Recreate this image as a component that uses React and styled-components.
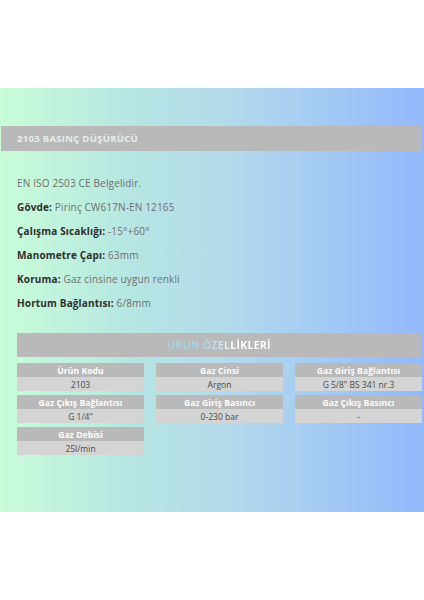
import styled, { createGlobalStyle } from 'styled-components';

const Global = createGlobalStyle`
  body {
    margin: 0;
    background: #fff;
    font-family: "Open Sans", "Liberation Sans", sans-serif;
  }
`;

const Band = styled.div`
  margin-top: 88px;
  height: 424px;
  padding: 38px 2px 0 1px;
  box-sizing: border-box;
  background: linear-gradient(90deg, #c9fdd8 0%, #b6e6e2 30%, #b2d9ec 55%, #a2c9f4 78%, #93b8fc 100%);
`;

const TitleBar = styled.div`
  height: 25px;
  background: #b9b9b9;
  display: flex;
  align-items: center;
  padding-left: 16px;
  font-weight: 700;
  font-size: 9.5px;
  color: #e4eeed;
  letter-spacing: 0.3px;
`;

const Specs = styled.div`
  margin-top: 20px;
  padding-left: 16px;
  display: flex;
  flex-direction: column;
`;

const SpecLine = styled.div`
  height: 24px;
  display: flex;
  align-items: center;
  font-size: 10px;
  letter-spacing: 0.15px;
  color: #6f6f6f;
  white-space: pre;

  b {
    color: #2e2e2e;
    font-weight: 700;
  }
`;

const Section = styled.div`
  margin: 18px 1px 0 16px;
  height: 24px;
  background: #b9b9b9;
  display: flex;
  align-items: center;
  justify-content: center;
`;

const SectionTitle = styled.span`
  font-weight: 700;
  font-size: 10.5px;
  letter-spacing: 0.3px;
  background: linear-gradient(90deg, #a3d0e3 0%, #a8d4e4 35%, #d6ebf1 55%, #ffffff 62%, #ffffff 100%);
  -webkit-background-clip: text;
  background-clip: text;
  color: transparent;
`;

const Grid = styled.div`
  margin: 6px 0 0 16px;
  display: grid;
  grid-template-columns: repeat(3, 127px);
  column-gap: 12px;
  row-gap: 4px;
`;

const Cell = styled.div`
  display: flex;
  flex-direction: column;
`;

const CellHead = styled.div`
  height: 14px;
  background: #b9b9b9;
  color: #fff;
  font-weight: 700;
  font-size: 8.5px;
  letter-spacing: 0.1px;
  display: flex;
  align-items: center;
  justify-content: center;
`;

const CellValue = styled.div`
  height: 14px;
  background: #d4d4d4;
  color: #4a4a4a;
  font-size: 8.5px;
  display: flex;
  align-items: center;
  justify-content: center;
`;

const specs = [
  [null, 'EN ISO 2503 CE Belgelidir.'],
  ['Gövde:', 'Pirinç CW617N-EN 12165'],
  ['Çalışma Sıcaklığı:', '-15°+60°'],
  ['Manometre Çapı:', '63mm'],
  ['Koruma:', 'Gaz cinsine uygun renkli'],
  ['Hortum Bağlantısı:', '6/8mm'],
];

const props = [
  ['Ürün Kodu', '2103'],
  ['Gaz Cinsi', 'Argon'],
  ['Gaz Giriş Bağlantısı', 'G 5/8" BS 341 nr.3'],
  ['Gaz Çıkış Bağlantısı', 'G 1/4"'],
  ['Gaz Giriş Basıncı', '0-230 bar'],
  ['Gaz Çıkış Basıncı', '-'],
  ['Gaz Debisi', '25l/min'],
];

export default function App() {
  return (
    <>
      <Global />
      <Band>
        <TitleBar>2103 BASINÇ DÜŞÜRÜCÜ</TitleBar>
        <Specs>
          {specs.map(([label, value], i) => (
            <SpecLine key={i}>
              {label && <b>{label} </b>}
              {value}
            </SpecLine>
          ))}
        </Specs>
        <Section>
          <SectionTitle>ÜRÜN ÖZELLİKLERİ</SectionTitle>
        </Section>
        <Grid>
          {props.map(([head, value]) => (
            <Cell key={head}>
              <CellHead>{head}</CellHead>
              <CellValue>{value}</CellValue>
            </Cell>
          ))}
        </Grid>
      </Band>
    </>
  );
}
